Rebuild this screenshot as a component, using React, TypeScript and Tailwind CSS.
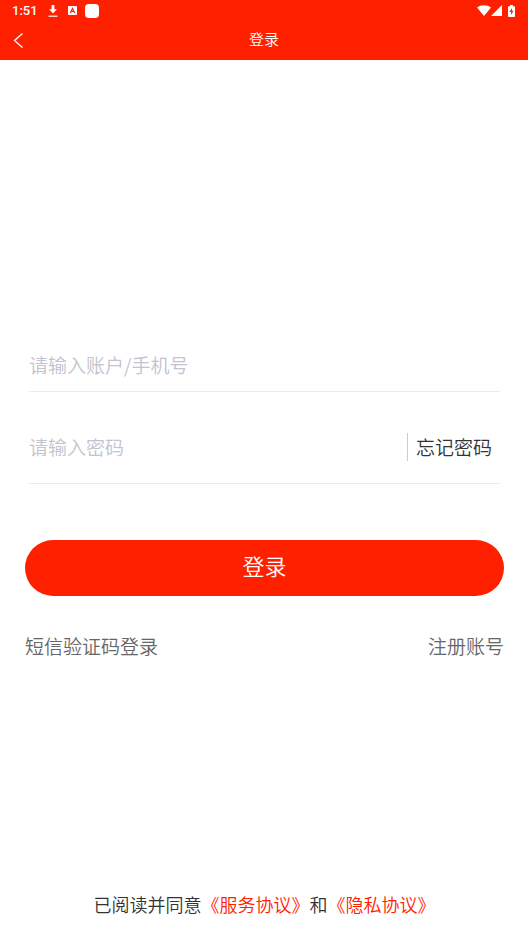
import React, { useState } from 'react';

const StatusBar: React.FC = () => (
    <div className="flex h-5 items-center justify-between px-3 pt-px text-white">
        <div className="flex items-center">
            <span className="w-9 font-[Roboto,sans-serif] text-[13px] leading-5 font-medium">1:51</span>
            <svg className="h-3 w-2.5" viewBox="0 0 10 12" fill="currentColor" aria-hidden="true">
                <path d="M3.6 0h2.8v4.2h2.4L5 8.6 1.2 4.2h2.4z" />
                <path d="M0.5 10.6h9v1.2h-9z" />
            </svg>
            <svg className="ml-2.5 h-[9px] w-[9px]" viewBox="0 0 9 9" aria-hidden="true">
                <rect width="9" height="9" rx="1" fill="currentColor" />
                <path d="M2.3 7 4.5 2.2 6.7 7M3.2 5.4h2.6" fill="none" stroke="#ff2000" strokeWidth="1.1" />
            </svg>
            <span className="ml-2 h-3.5 w-3.5 rounded-sm bg-white" />
        </div>
        <div className="flex items-center">
            <svg className="h-[11px] w-3.5" viewBox="0 0 14 11" fill="currentColor" aria-hidden="true">
                <path d="M0 2.6C4-.6 10-.6 14 2.6L7 11z" />
            </svg>
            <svg className="h-[11px] w-[11px]" viewBox="0 0 11 11" fill="currentColor" aria-hidden="true">
                <path d="M11 0v11H0z" />
            </svg>
            <svg className="mr-px ml-1.5 h-3 w-[7px]" viewBox="0 0 7 12" aria-hidden="true">
                <path d="M2 0h3v1.2h1.2q.8 0 .8.8v9.2q0 .8-.8.8H.8q-.8 0-.8-.8V2q0-.8.8-.8H2z" fill="currentColor" />
                <path d="M4 3 1.5 7h1.6v3l2.4-4.2H4z" fill="#ff2000" />
            </svg>
        </div>
    </div>
);

const App: React.FC = () => {
    const [account, setAccount] = useState('');
    const [password, setPassword] = useState('');

    return (
        <div className="flex min-h-screen flex-col bg-white font-['Noto_Sans_CJK_SC',sans-serif] font-[350] text-[#333333]">
            <header className="bg-[#ff2000] text-white">
                <StatusBar />
                <div className="grid h-10 grid-cols-[48px_1fr_48px] items-center">
                    <button type="button" aria-label="返回" className="flex h-10 items-center pl-3">
                        <svg className="h-4 w-3" viewBox="0 0 12 16" fill="none" stroke="currentColor" strokeWidth="1.3" aria-hidden="true">
                            <path d="M10.5 1.5 2.5 8.5l8 7" />
                        </svg>
                    </button>
                    <h1 className="pb-0.5 text-center text-[15px] leading-9">登录</h1>
                </div>
            </header>

            <main className="flex flex-1 flex-col pr-6 pl-[25px]">
                <form className="pt-[284px]" onSubmit={e => e.preventDefault()}>
                    <div className="mx-1 border-b border-[#ebebeb] pb-1.5">
                        <input
                            type="text"
                            aria-label="账户/手机号"
                            placeholder="请输入账户/手机号"
                            value={account}
                            onChange={e => setAccount(e.target.value)}
                            className="block h-[41px] w-full text-[19px] outline-none placeholder:text-[#c0c4cc]"
                        />
                    </div>
                    <div className="mx-1 flex items-center border-b border-[#ebebeb] pt-[34px] pb-4">
                        <input
                            type="password"
                            aria-label="密码"
                            placeholder="请输入密码"
                            value={password}
                            onChange={e => setPassword(e.target.value)}
                            className="block h-[41px] min-w-0 flex-1 text-[19px] outline-none placeholder:text-[#c0c4cc]"
                        />
                        <button type="button" className="mr-2 border-l border-[#cccccc] pl-2 text-[19px] leading-7">忘记密码</button>
                    </div>
                    <button type="submit" className="mt-14 h-14 w-full rounded-full bg-[#ff2000] pb-1.5 text-[22px] text-white">登录</button>
                </form>

                <div className="mt-9 flex justify-between text-[19px] leading-7 text-[#666666]">
                    <a href="#sms">短信验证码登录</a>
                    <a href="#register">注册账号</a>
                </div>

                <p className="mt-auto pb-[22px] text-center text-[18px] leading-6">
                    已阅读并同意
                    <a href="#service" className="text-[#ff2000]">《服务协议》</a>
                    和
                    <a href="#privacy" className="text-[#ff2000]">《隐私协议》</a>
                </p>
            </main>
        </div>
    );
};

export default App;
